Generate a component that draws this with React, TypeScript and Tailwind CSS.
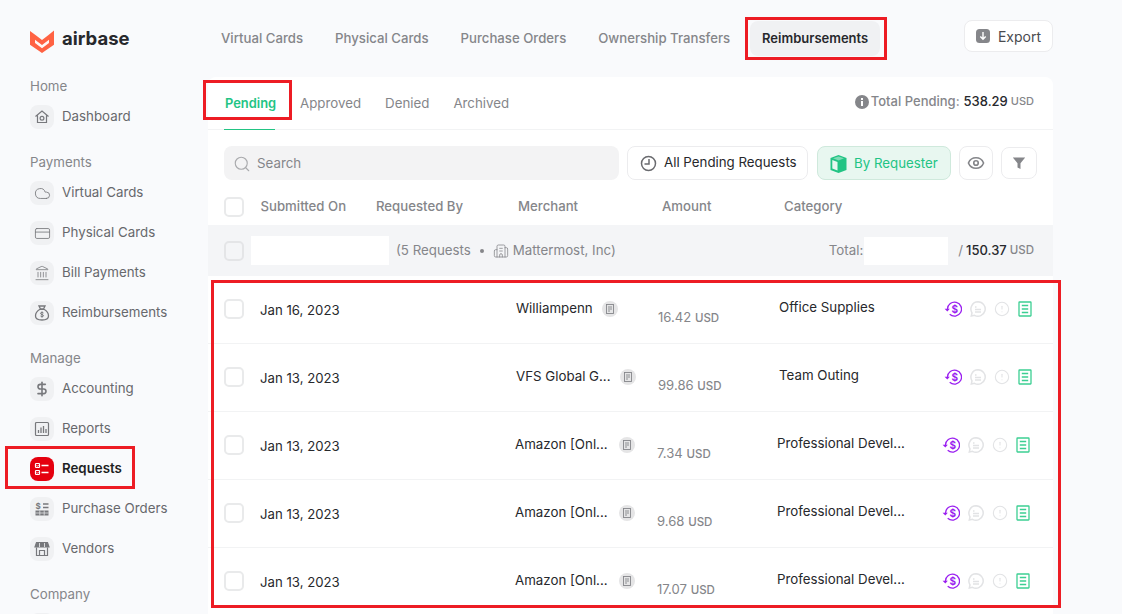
import React from "react";
import {
  Building2,
  CircleAlert,
  Cloud,
  CreditCard,
  DollarSign,
  Eye,
  Landmark,
  Search,
} from "lucide-react";

const iconBox = "flex h-6 w-6 shrink-0 items-center justify-center rounded-lg bg-[#f0f1f3] text-[#77787c]";
const check = "h-5 w-5 shrink-0 rounded-[5px] border-2 border-[#e9eaeb] bg-white";

const HomeIcon = () => (
  <svg width="16" height="16" viewBox="0 0 16 16" fill="none" stroke="currentColor" strokeWidth="1.2">
    <path d="M1.5 7.5 8 2l6.5 5.5M3.5 6.5v7h9v-7" />
    <circle cx="8" cy="9.2" r="1.9" />
  </svg>
);

const BagIcon = () => (
  <svg width="18" height="18" viewBox="0 0 18 18" fill="none" stroke="currentColor" strokeWidth="1.3">
    <path d="M6 2h6l-1.5 3h-3zM7 5.3C4 7 2.5 9.5 2.5 12c0 2.6 2 4 6.5 4s6.500-1.400 6.500-4c0-2.500-1.500-5-4.500-6.700z" />
    <path d="M10.500 9c-.5-.8-3-1-3 .4 0 1.500 3 .8 3 2.300 0 1.300-2.500 1.200-3 .3M9 7.500v6" strokeWidth="1" />
  </svg>
);

const ReportsIcon = () => (
  <svg width="16" height="16" viewBox="0 0 16 16" fill="none" stroke="currentColor" strokeWidth="1.2">
    <rect x="1.500" y="1.500" width="13" height="13" rx="1" />
    <path d="M4.500 12V9M7 12V6.500M9.500 12V5M12 12V8" strokeWidth="1.300" />
  </svg>
);

const VendorsIcon = () => (
  <svg width="16" height="16" viewBox="0 0 16 16" fill="none" stroke="currentColor" strokeWidth="1.200">
    <path d="M2.500 1.500h11L15 6H1z" fill="currentColor" />
    <path d="M5.500 2v4M10.500 2v4" stroke="#f0f1f3" strokeWidth=".8" />
    <path d="M2.500 6.500v8h11v-8M5.500 14.500V9.500h5v5" />
  </svg>
);

const RequestsIcon = () => (
  <svg width="16" height="16" viewBox="0 0 16 16" fill="none" stroke="white" strokeWidth="1.2">
    <rect x="1.500" y="2.500" width="4" height="4" rx=".7" />
    <rect x="1.500" y="9.500" width="4" height="4" rx=".7" />
    <path d="M7.500 4.500h7M7.500 11.500h7" strokeWidth="1.500" />
    <path d="m2.600 4.500.8.8 1.200-1.300M2.600 11.500l.8.8 1.200-1.300" strokeWidth=".9" />
  </svg>
);

const OrdersIcon = () => (
  <svg width="16" height="16" viewBox="0 0 16 16" fill="none" stroke="currentColor">
    <path d="M9 3h5.500M9 6.500h5.500" strokeWidth="1.300" />
    <rect x="1.500" y="9.500" width="13" height="5" fill="currentColor" stroke="none" />
    <path d="M5.800 9.500v5M10.200 9.500v5M1.500 12h13" stroke="#f0f1f3" strokeWidth=".7" />
    <text x="1.500" y="8" fontSize="8" fontWeight="700" fill="currentColor" stroke="none" fontFamily="Inter, sans-serif">$</text>
  </svg>
);

const Logo = () => (
  <svg width="24" height="25" viewBox="0 0 24 25">
    <path fill="#ff6243" d="M0 3l5.800 4.300L12 12l6.200-4.700L24 2.600v14.200L12 25 0 16.800z" />
    <path fill="#fff" d="M5 11.800 12 17l7-5.200v3.300L12 20.200 5 15.100z" opacity=".95" />
  </svg>
);

const ClockIcon = () => (
  <svg width="17" height="17" viewBox="0 0 17 17" fill="none" stroke="#6a6b6f" strokeWidth="1.500">
    <circle cx="8.500" cy="8.500" r="7" />
    <path d="M9 4v5H4.500" />
  </svg>
);

const CubeIcon = () => (
  <svg width="17" height="18" viewBox="0 0 17 18">
    <path fill="#22c484" d="M8.500 0 16.500 3v12l-8 3-8-3V3z" />
    <path fill="#e8f7f0" d="M2.300 5 7.500 7v8.500l-5.200-2z" />
    <path fill="#7fdcb6" d="M3 3.300 8.500 1.400l5.500 1.900-5.500 2.100z" />
  </svg>
);

const FilterIcon = () => (
  <svg width="14" height="14" viewBox="0 0 14 14" fill="#85868a">
    <path d="M.8 1.500h12.400L8.500 7.300V13l-3-1.500V7.300z" />
  </svg>
);

const ExportIcon = () => (
  <svg width="14" height="14" viewBox="0 0 14 14">
    <rect width="14" height="14" rx="3.500" fill="#85868a" />
    <path d="M7 3v7M4.300 7.500 7 10.200l2.700-2.700" fill="none" stroke="#fff" strokeWidth="1.400" />
  </svg>
);

const InfoIcon = () => (
  <svg width="14" height="14" viewBox="0 0 14 14">
    <circle cx="7" cy="7" r="7" fill="#85868a" />
    <rect x="6" y="6" width="2" height="5" fill="#fff" />
    <rect x="6" y="3" width="2" height="2" fill="#fff" />
  </svg>
);

const RefundIcon = () => (
  <svg width="18" height="16" viewBox="0 0 18 16" fill="none" stroke="#9a1ff0" strokeWidth="1.300">
    <path d="M3.500 8a7 7 0 1 1 2.200 5.200" />
    <path d="M.6 7.800h5.200L3.300 10.500z" fill="#9a1ff0" stroke="none" />
    <text x="7.500" y="11.500" fontSize="10" fontWeight="700" fill="#9a1ff0" stroke="none" fontFamily="Inter, sans-serif">$</text>
  </svg>
);

const ChatIcon = () => (
  <svg width="16" height="16" viewBox="0 0 16 16" fill="none" stroke="#e2e3e5" strokeWidth="1.500">
    <path d="M8 .8a7.200 7.200 0 1 1-3.500 13.500L1.300 15l.7-3.200A7.200 7.200 0 0 1 8 .8z" />
    <path d="M5 6h1.500M5 8.500h6M5 11h6" />
  </svg>
);

const ReceiptIcon = () => (
  <svg width="14" height="16" viewBox="0 0 14 16" fill="none" stroke="#3ccf93" strokeWidth="1.300">
    <rect x="1" y="1" width="12" height="14" rx=".5" />
    <path d="M3.800 4.500h6.400M3.800 8h6.400M3.800 11.500h6.400" />
  </svg>
);

const DocBadge = () => (
  <span className="flex h-4 w-4 shrink-0 items-center justify-center rounded-full bg-[#e5e5e6]">
    <svg width="8" height="10" viewBox="0 0 8 10" fill="none" stroke="#85868a" strokeWidth=".9">
      <rect x=".5" y=".5" width="7" height="9" />
      <path d="M2 3h4M2 5h4M2 7h2" />
    </svg>
  </span>
);

const sections = [
  {
    title: "Home",
    items: [{ label: "Dashboard", icon: <HomeIcon /> }],
  },
  {
    title: "Payments",
    items: [
      { label: "Virtual Cards", icon: <Cloud size={17} strokeWidth={1.2} /> },
      { label: "Physical Cards", icon: <CreditCard size={17} strokeWidth={1.2} /> },
      { label: "Bill Payments", icon: <Landmark size={16} strokeWidth={1.2} /> },
      { label: "Reimbursements", icon: <BagIcon /> },
    ],
  },
  {
    title: "Manage",
    items: [
      { label: "Accounting", icon: <DollarSign size={16} strokeWidth={2.4} /> },
      { label: "Reports", icon: <ReportsIcon /> },
      { label: "Requests", icon: <RequestsIcon />, active: true },
      { label: "Purchase Orders", icon: <OrdersIcon /> },
      { label: "Vendors", icon: <VendorsIcon /> },
    ],
  },
  { title: "Company", items: [{ label: "", icon: null }] },
];

const rows = [
  { date: "Jan 16, 2023", merchant: "Williampenn", merchantCls: "w-[287px] gap-[9px] pl-[145px]", amount: "16.42", amountCls: "w-[121px]", cat: "Office Supplies" },
  { date: "Jan 13, 2023", merchant: "VFS Global G...", merchantCls: "w-[287px] gap-[9px] pl-[145px]", amount: "99.86", amountCls: "w-[121px]", cat: "Team Outing" },
  { date: "Jan 13, 2023", merchant: "Amazon [Onl...", merchantCls: "w-[286px] gap-[11px] pl-[144px]", amount: "7.34", amountCls: "w-[120px]", cat: "Professional Devel..." },
  { date: "Jan 13, 2023", merchant: "Amazon [Onl...", merchantCls: "w-[286px] gap-[11px] pl-[144px]", amount: "9.68", amountCls: "w-[120px]", cat: "Professional Devel..." },
  { date: "Jan 13, 2023", merchant: "Amazon [Onl...", merchantCls: "w-[286px] gap-[11px] pl-[144px]", amount: "17.07", amountCls: "w-[120px]", cat: "Professional Devel..." },
];

const nav = ["Virtual Cards", "Physical Cards", "Purchase Orders", "Ownership Transfers"];

const Sidebar = () => (
  <aside className="flex h-full w-[208px] shrink-0 flex-col pl-[30px]">
    <div className="flex h-[78px] shrink-0 items-start gap-[8px] pt-[28px]">
      <Logo />
      <span className="text-[18.5px] leading-[20px] font-bold text-[#27282c]">airbase</span>
    </div>
    {sections.map((s) => (
      <div key={s.title} className="mb-[25px] flex flex-col">
        <div className="h-[17px] text-[13.3px] leading-[17px] text-[#85868a]">{s.title}</div>
        <div className="flex flex-col gap-[16px] pt-[10px]">
          {s.items.map((it) => (
            <div key={it.label} className="flex h-6 items-center gap-[8px]">
              {it.active ? (
                <span className="flex h-6 w-6 shrink-0 items-center justify-center rounded-lg bg-[#e5000f]">{it.icon}</span>
              ) : (
                <span className={iconBox}>{it.icon}</span>
              )}
              <span className={it.active ? "text-[13.3px] font-semibold text-[#1e1f23]" : "text-[13.3px] text-[#67686c]"}>{it.label}</span>
            </div>
          ))}
        </div>
      </div>
    ))}
  </aside>
);

const Row = ({ r }: { r: (typeof rows)[number] }) => (
  <div className="flex h-[68px] shrink-0 text-[13.3px] text-[#27282c]">
    <div className="flex w-[164px] items-center gap-[16px] border-b border-[#f2f3f4] pl-[16px]">
      <span className={`${check} mt-[-1px]`} />
      <span className="pt-[3px] text-[13.2px] whitespace-nowrap">{r.date}</span>
    </div>
    <div className="ml-[-1px] flex flex-1 items-center border-b border-[#f2f3f4]">
      <div className={`flex items-center pb-[1px] ${r.merchantCls}`}>
        <span className="whitespace-nowrap">{r.merchant}</span>
        <DocBadge />
      </div>
      <div className={`pt-[16px] text-[13.1px] whitespace-nowrap text-[#85868a] ${r.amountCls}`}>
        {r.amount} <span className="text-[11.5px] font-medium">USD</span>
      </div>
      <div className="w-[165px] pb-[3px] whitespace-nowrap">{r.cat}</div>
      <div className="flex items-center gap-[8px] pb-[1px]">
        <RefundIcon />
        <ChatIcon />
        <CircleAlert size={16} strokeWidth={1.600} color="#e2e3e5" />
        <ReceiptIcon />
      </div>
    </div>
  </div>
);

export default function App() {
  return (
    <div className="relative flex h-[614px] w-[1122px] overflow-hidden bg-[#f9fafc] font-['Inter',sans-serif]">
      <Sidebar />

      <main className="flex h-full w-[845px] flex-col">
        <div className="flex h-[77px] shrink-0 items-start">
          <nav className="mt-[21px] flex h-[35px] items-center gap-[32px] pl-[13px]">
            {nav.map((n) => (
              <span key={n} className="whitespace-nowrap text-[13.2px] font-medium text-[#85868a]">{n}</span>
            ))}
          </nav>
          <div className="mt-[21px] ml-[20px] flex h-[35px] w-[130px] items-center justify-center rounded-lg bg-[#f0f1f3] text-[13px] font-semibold text-[#27282c]">
            Reimbursements
          </div>
          <div className="mt-[20px] ml-auto flex h-[32px] w-[89px] items-center justify-center gap-[8px] rounded-lg border border-[#ececee] bg-white text-[14px] text-[#4a4b4f]">
            <ExportIcon />
            Export
          </div>
        </div>

        <section className="flex flex-1 flex-col overflow-hidden rounded-t-lg bg-white">
          <div className="flex h-[53px] shrink-0 border-b border-[#f2f3f4] pr-[19px] pl-[16px]">
            <div className="relative flex h-[52px] w-[76px] items-center pt-[2px] pl-[1px] text-[12.9px] font-semibold text-[#22c484]">
              Pending
              <span className="absolute right-[25px] bottom-[-1px] left-0 h-[1px] bg-[#22c484]" />
            </div>
            <div className="flex items-center gap-[24px] pt-[2px] text-[13.3px] text-[#85868a]">
              <span>Approved</span>
              <span>Denied</span>
              <span>Archived</span>
            </div>
            <div className="ml-auto flex items-center gap-[2px] pb-[3px]">
              <InfoIcon />
              <span className="text-[13px] font-medium text-[#85868a]">Total Pending:</span>
              <span className="ml-[2px] text-[13px] font-medium text-[#27282c]">538.29</span>
              <span className="ml-[1px] text-[11px] font-medium text-[#85868a]">USD</span>
            </div>
          </div>

          <div className="flex items-center gap-[8px] pt-[16px] pr-[16px] pl-[16px]">
            <div className="flex h-[34px] w-[395px] shrink-0 items-center gap-[6px] rounded-lg bg-[#f3f3f4] pt-[2px] pl-[9px] text-[13.3px] text-[#85868a]">
              <Search size={18} strokeWidth={1.500} color="#a9aaad" />
              Search
            </div>
            <div className="flex h-[34px] w-[181px] shrink-0 items-center gap-[7px] rounded-lg border border-[#ececee] pl-[12px] text-[13.3px] text-[#27282c]">
              <ClockIcon />
              All Pending Requests
            </div>
            <div className="ml-[1px] flex h-[34px] w-[134px] shrink-0 items-center gap-[7px] rounded-lg border border-[#cfe9dc] bg-[#e8f7f0] pt-[2px] pl-[12px] text-[13.3px] text-[#22c484]">
              <CubeIcon />
              By Requester
            </div>
            <div className="flex h-[34px] w-[34px] shrink-0 items-center justify-center rounded-lg border border-[#ececee]">
              <Eye size={18} strokeWidth={2.2} color="#85868a" />
            </div>
            <div className="flex h-[32px] w-[36px] shrink-0 items-center justify-center rounded-lg border border-[#ececee]">
              <FilterIcon />
            </div>
          </div>

          <div className="flex h-[45px] shrink-0 items-center pt-[9px] pl-[16px] text-[13.2px] font-medium text-[#85868a]">
            <span className={check} />
            <span className="ml-[16.500px] w-[115.500px]">Submitted On</span>
            <span className="w-[142px]">Requested By</span>
            <span className="w-[144px]">Merchant</span>
            <span className="w-[122px]">Amount</span>
            <span>Category</span>
          </div>

          <div className="flex h-[51px] shrink-0 items-center bg-[#f4f5f7] pr-[19px] pl-[16px] text-[13.3px] text-[#85868a]">
            <span className="h-5 w-5 shrink-0 rounded-[5px] border-2 border-[#e4e5e7] bg-[#f4f5f7]" />
            <span className="ml-[7px] h-[29px] w-[138px] shrink-0 bg-white" />
            <span className="ml-[7px] whitespace-nowrap">(5 Requests</span>
            <span className="mr-[9px] ml-[9px] h-1 w-1 shrink-0 rounded-full bg-[#85868a]" />
            <Building2 size={16} strokeWidth={1.200} />
            <span className="ml-[4px] whitespace-nowrap">Mattermost, Inc)</span>
            <span className="ml-auto">Total:</span>
            <span className="ml-[1px] h-[28px] w-[84px] shrink-0 bg-white" />
            <span className="ml-[10px]">/</span>
            <span className="ml-[3px] text-[13px] font-medium text-[#27282c]">150.37</span>
            <span className="ml-[3px] text-[11.5px] font-medium">USD</span>
          </div>

          {rows.map((r, i) => (
            <Row key={i} r={r} />
          ))}
        </section>
      </main>

      {/* red annotation boxes drawn on the screenshot */}
      <div className="pointer-events-none absolute top-[17px] left-[745px] h-[43px] w-[142px] border-[3px] border-[#ed1c24]" />
      <div className="pointer-events-none absolute top-[80px] left-[203px] h-[40px] w-[89px] border-[3px] border-[#ed1c24]" />
      <div className="pointer-events-none absolute top-[446px] left-[5px] h-[43px] w-[130px] border-[3px] border-[#ed1c24]" />
      <div className="pointer-events-none absolute top-[280px] left-[211px] h-[328px] w-[850px] border-[3px] border-[#ed1c24]" />
    </div>
  );
}
